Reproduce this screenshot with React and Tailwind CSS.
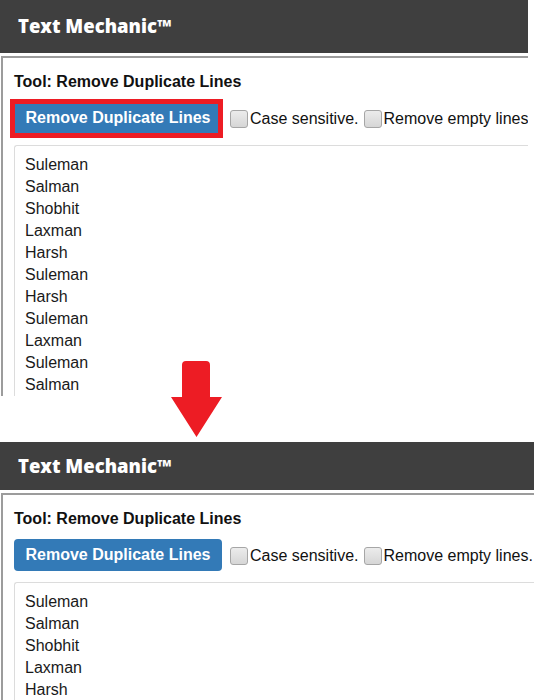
const before = [
  'Suleman',
  'Salman',
  'Shobhit',
  'Laxman',
  'Harsh',
  'Suleman',
  'Harsh',
  'Suleman',
  'Laxman',
  'Suleman',
  'Salman',
  'Harsh',
]

const after = ['Suleman', 'Salman', 'Shobhit', 'Laxman', 'Harsh', 'Suleman']

function Checkbox({ label }) {
  return (
    <label className="flex items-start mt-[6px]">
      <span className="mt-[2px] w-[18px] h-[18px] rounded-[3px] border border-[#a6a6a6] bg-gradient-to-b from-[#ececec] to-[#d6d6d6] flex-shrink-0" />
      <span className="ml-[2px] text-[16px] leading-[22px] text-[#111] whitespace-nowrap">{label}</span>
    </label>
  )
}

function MechanicPanel({ lines, highlighted, headerHeight }) {
  return (
    <div className="font-['Liberation_Sans',Arial,sans-serif]">
      {/* Header */}
      <div className={`bg-[#3f3f3f] flex items-center pl-[18px] ${headerHeight}`}>
        <h1 className="font-['Open_Sans',sans-serif] font-extrabold text-[18.5px] text-white leading-none">
          Text Mechanic™
        </h1>
      </div>

      {/* Tool panel */}
      <div className="mt-[3px] ml-[1px] border-l-2 border-t-2 border-[#9c9c9c] pl-[11px] pt-[13px]">
        <h2 className="text-[16px] leading-[22px] font-bold text-[#111]">Tool: Remove Duplicate Lines</h2>

        <div className="flex items-start mt-[9px]">
          <div className="relative flex-shrink-0">
            <button className="h-[32px] w-[208px] rounded-[4px] bg-[#337ab7] text-white text-[16px] font-bold">
              Remove Duplicate Lines
            </button>
            {highlighted && (
              <span className="absolute -left-[4px] -top-[3px] w-[213px] h-[39px] border-[5px] border-[#ed1c24]" />
            )}
          </div>
          <div className="ml-[8px]">
            <Checkbox label="Case sensitive." />
          </div>
          <div className="ml-[5px]">
            <Checkbox label="Remove empty lines." />
          </div>
        </div>

        <div className="mt-[11px] border-l border-t border-[#dcdcdc] rounded-tl-[3px] pl-[10px] pt-[8px]">
          {lines.map((line, i) => (
            <p key={i} className="text-[16px] leading-[22px] text-[#1a1a1a]">
              {line}
            </p>
          ))}
        </div>
      </div>
    </div>
  )
}

export default function App() {
  return (
    <div className="relative w-[534px] h-[700px] bg-white overflow-hidden">
      <div className="w-[528px] h-[396px] overflow-hidden">
        <MechanicPanel lines={before} highlighted headerHeight="h-[53px]" />
      </div>

      <div className="h-[46px]" />

      <div className="w-[534px]">
        <MechanicPanel lines={after} headerHeight="h-[48px]" />
      </div>

      {/* Red arrow */}
      <svg className="absolute left-[170px] top-[360px]" width="54" height="80" viewBox="0 0 54 80">
        <path
          d="M12 5 Q12 1 16 1 L36 1 Q40 1 40 5 L40 37 L52 37 L26.5 77 L1 37 L12 37 Z"
          fill="#ed1c24"
        />
      </svg>
    </div>
  )
}
